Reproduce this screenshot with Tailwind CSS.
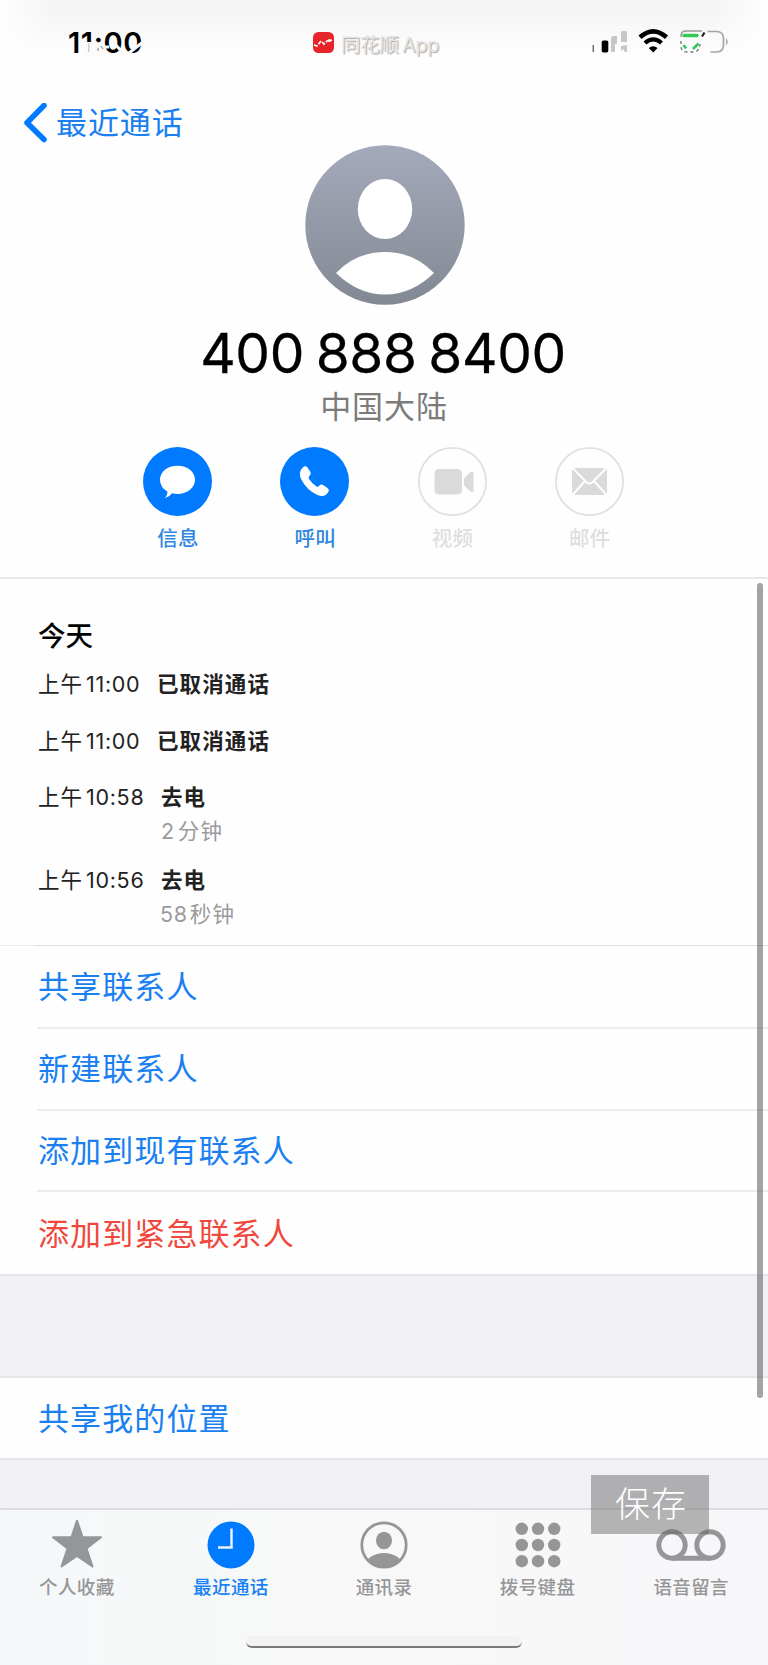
<!DOCTYPE html>
<html lang="zh-CN">
<head>
<meta charset="utf-8">
<title>最近通话</title>
<script src="https://cdn.jsdelivr.net/npm/@tailwindcss/browser@4"></script>
</head>
<body class="w-[768px] h-[1665px] overflow-hidden bg-[#fefefe] font-['Inter','Noto_Sans_CJK_SC',sans-serif] leading-none">
<div class="relative flex flex-col w-[768px] h-[1665px] overflow-hidden">

  <!-- status bar -->
  <header class="relative flex items-center h-[84px] shrink-0">
    <div class="absolute inset-x-0 top-0 h-[56px] bg-linear-to-b from-[#f4f4f4] via-[#f5f5f5] via-25% to-[#fefefe]"></div>
    <div class="absolute left-0 top-0 h-[58px] w-[56px] bg-linear-to-r from-[#fefefe] to-[#fefefe]/0"></div>
    <div class="absolute right-0 top-0 h-[58px] w-[56px] bg-linear-to-l from-[#fefefe] to-[#fefefe]/0"></div>
    <div class="relative ml-[68px] w-[76px] h-[32px] flex items-center text-[29px] font-semibold tracking-[0.600px] text-black whitespace-nowrap">11:00
      <svg class="absolute inset-0" width="76" height="32" viewBox="0 0 76 32" fill="none">
        <path d="M14.500 16H29V30H14.500Z" fill="#fbfbfb"/><path d="M28 18H37V29H28Z" fill="#fbfbfb"/>
        <path d="M20.800 17V26" stroke="#bbb"/><path d="M30 22v3M33 20l2 3" stroke="#777"/>
        <path d="M35 21l6 0M46 17l10 11M61 27l14-11" stroke="#fbfbfb" stroke-width="3"/>
      </svg>
    </div>
    <div class="relative ml-[169px] flex items-center gap-[7px] h-[30px]">
      <svg width="21" height="21" viewBox="0 0 21 21" fill="none"><rect width="21" height="21" rx="5.500" fill="#e8242b"/><path d="M1 13l3 1 4-5 3 3 3-3 5-1" stroke="#fff" stroke-width="1.600" stroke-dasharray="4 1.500"/><circle cx="16.500" cy="8.500" r="1.600" fill="#fff"/></svg>
      <div class="mt-[7px] text-[19.500px] tracking-[-0.200px] [word-spacing:-2px] text-[#e4e4e4] whitespace-nowrap [text-shadow:1px_1px_1px_#a5a5a5]">同花顺 App</div>
    </div>
    <svg class="absolute left-[585px] top-[20px]" width="150" height="50" viewBox="0 0 150 50" fill="none">
      <path d="M8.300 25v7" stroke="#666" stroke-width="1.400"/>
      <rect x="16.700" y="20.500" width="6.600" height="12" rx="1.800" fill="#000"/>
      <path d="M26 32V19q0-3 3-3h3v8h-2v8z" fill="#c6c6c6"/>
      <path d="M36 22V12.500q0-1.500 1.500-1.500h3q1.500 0 1.500 1.500V22zM36 26l6-1v7h-2l-2-3-2 2z" fill="#c6c6c6"/>
      <path d="M55 17.300Q68.200 5.400 81.500 17.300" stroke="#000" stroke-width="4.600"/>
      <path d="M60 23Q68.200 15.800 76.500 23" stroke="#000" stroke-width="4.200"/>
      <path d="M63.800 28Q68.200 24.600 72.600 28L68.200 32.600Z" fill="#000"/>
      <path d="M96 17v-1q0-5 5-5h16" stroke="#999" stroke-width="1.500"/>
      <path d="M96 21v5q0 6 6 6h8q4-1 5-8" stroke="#777" stroke-width="1.400" stroke-dasharray="3 3"/>
      <path d="M117 16.500l2.500-4" stroke="#222" stroke-width="2.200"/>
      <path d="M122.500 11.500h9q7 0 7 7v6.500q0 7-7 7h-6" stroke="#a5a5a5" stroke-width="1.700"/>
      <path d="M141 18q3.600 3.500 0 7.500z" fill="#aaa"/>
      <path d="M99 15.500h13" stroke="#34c759" stroke-width="3.400" stroke-linecap="round"/>
      <path d="M98.500 25l2.500 3.500M108 29l5.500-5.500" stroke="#34c759" stroke-width="2.600"/>
    </svg>
  </header>

  <!-- contact card -->
  <section class="relative flex flex-col items-center h-[495px] shrink-0 border-b-2 border-[#e9e9e9]">
    <a class="absolute left-[24px] top-[18px] h-[42px] flex items-center gap-[9px] text-[#1a80f2]">
      <svg width="23" height="40" viewBox="0 0 23 40" fill="none"><path d="M20 2.500L3 19.700 20 36.500" stroke="#007aff" stroke-width="5.500" stroke-linecap="round" stroke-linejoin="round"/></svg>
      <span class="-mt-[2px] text-[31px] tracking-[0.900px]">最近通话</span>
    </a>
    <svg class="mt-[60.500px] ml-px shrink-0" width="160" height="160" viewBox="0 0 160 160">
      <defs><linearGradient id="av" x1="0" y1="0" x2="0" y2="1"><stop stop-color="#a4aaba"/><stop offset="1" stop-color="#838993"/></linearGradient></defs>
      <circle cx="80" cy="80" r="79.700" fill="url(#av)"/>
      <ellipse cx="80" cy="64" rx="27.200" ry="30" fill="#fff"/>
      <path d="M31 128Q51 107 80 107T129 128Q107 149.500 80 149.500T31 128Z" fill="#fff"/>
    </svg>
    <h1 class="mt-[18.500px] -ml-[2px] h-[60px] flex items-center text-[55px] text-black whitespace-nowrap [word-spacing:-3.500px] tracking-[-0.350px] [-webkit-text-stroke:0.300px_black]">400 888 8400</h1>
    <p class="mt-[6px] h-[34px] flex items-center text-[31px] tracking-[0.900px] text-[#7b7b7b]">中国大陆</p>
    <div class="mt-[24px] -ml-px grid grid-cols-4 w-[549px] text-[20.500px] tracking-[0.500px]">
      <div class="flex flex-col items-center gap-[13px] text-[#2f86e0]">
        <svg width="69" height="69" viewBox="0 0 69 69"><circle cx="34.500" cy="34.500" r="34.500" fill="#007aff"/><path d="M34.500 18.700C44.500 18.700 52 24.800 52 32.800S44.500 47 34.500 47Q31.500 47 29 46.300Q26.500 50 22 51Q24.500 48 24.600 44.700Q17 40.500 17 32.800C17 24.800 24.500 18.700 34.500 18.700Z" fill="#fff"/></svg>
        <span class="ml-px font-medium">信息</span>
      </div>
      <div class="flex flex-col items-center gap-[13px] text-[#2f86e0]">
        <svg width="69" height="69" viewBox="0 0 69 69"><circle cx="34.500" cy="34.500" r="34.500" fill="#007aff"/><path d="M23.500 20.700Q26 18.700 28 21L31 25.500Q32 27.500 30 29.300Q28.500 30.500 29.500 32.500Q32.500 37 37 40Q38.500 40.800 39.700 39.300Q41.500 37.300 44 38.700L48 41.500Q50.300 43.300 48.500 46Q45 51.500 38 48.500Q27 43.500 21.500 32.500Q18.500 25.500 23.500 20.700Z" transform="translate(-.5 -.5)" fill="#fff"/></svg>
        <span class="ml-px font-medium">呼叫</span>
      </div>
      <div class="flex flex-col items-center gap-[13px] text-[#dedee0]">
        <svg width="69" height="69" viewBox="0 0 69 69"><circle cx="34.500" cy="34.500" r="33.600" fill="none" stroke="#e1e1e1" stroke-width="1.800"/><rect x="16.500" y="22" width="27.500" height="25.500" rx="4.500" fill="#dadada"/><path d="M46 31.500L52.500 25Q55.500 23.500 55.500 26V43.500Q55.500 46 52.500 44.500L46 38.500Z" fill="#dadada"/></svg>
        <span class="ml-px font-medium">视频</span>
      </div>
      <div class="flex flex-col items-center gap-[13px] text-[#dedee0]">
        <svg width="69" height="69" viewBox="0 0 69 69" fill="none"><circle cx="34.500" cy="34.500" r="33.600" stroke="#e1e1e1" stroke-width="1.800"/><rect x="17" y="21" width="35" height="27" rx="1.500" fill="#dadada"/><path d="M17.500 21L31.500 35.300Q34.500 38 37.500 35.300L51.500 21M17.500 48L29.500 34.500M51.500 48L39.500 34.500" stroke="#fff" stroke-width="2"/></svg>
        <span class="ml-px font-medium">邮件</span>
      </div>
    </div>
  </section>

  <!-- call history -->
  <section class="flex flex-col h-[366px] shrink-0 pl-[38px] pt-[42px] text-[21.500px] text-[#222]">
    <h2 class="h-[32px] flex items-center text-[27.500px] font-medium text-black">今天</h2>
    <div class="mt-[20px] h-[24px] flex items-center"><span class="w-[119px] flex gap-[3px]"><span class="tracking-[1px]">上午</span><span class="tracking-[0.700px]">11:00</span></span><b class="font-bold tracking-[1.100px]">已取消通话</b></div>
    <div class="mt-[33px] h-[24px] flex items-center"><span class="w-[119px] flex gap-[3px]"><span class="tracking-[1px]">上午</span><span class="tracking-[0.700px]">11:00</span></span><b class="font-bold tracking-[1.100px]">已取消通话</b></div>
    <div class="mt-[32px] h-[24px] flex items-center"><span class="w-[123px] flex gap-[3px]"><span class="tracking-[1px]">上午</span><span class="tracking-[0.700px]">10:58</span></span><b class="font-bold tracking-[1.100px]">去电</b></div>
    <div class="mt-[10px] ml-[123px] h-[24px] flex items-center gap-[3px] text-[#9b9b9e]"><span class="tracking-[0.700px]">2</span><span class="tracking-[1.100px]">分钟</span></div>
    <div class="mt-[25px] h-[24px] flex items-center"><span class="w-[123px] flex gap-[3px]"><span class="tracking-[1px]">上午</span><span class="tracking-[0.700px]">10:56</span></span><b class="font-bold tracking-[1.100px]">去电</b></div>
    <div class="mt-[10px] ml-[122px] h-[24px] flex items-center gap-[2px] text-[#9b9b9e]"><span class="tracking-[0.700px]">58</span><span class="tracking-[1.100px]">秒钟</span></div>
  </section>

  <!-- contact actions -->
  <section class="flex flex-col h-[329px] shrink-0 border-t border-[#e9e9e9] text-[31px] tracking-[1.100px] text-[#1a80f2]">
    <div class="ml-[37px] h-[83px] flex items-center border-b-2 border-[#ececec] shadow-[0_-1px_0_#dedede]"><span class="ml-px">共享联系人</span></div>
    <div class="ml-[37px] h-[82px] flex items-center border-b-2 border-[#ececec]"><span class="ml-px">新建联系人</span></div>
    <div class="ml-[37px] h-[82px] flex items-center border-b-2 border-[#ececec]"><span class="ml-px">添加到现有联系人</span></div>
    <div class="ml-[37px] h-[82px] flex items-center text-[#f0483c]"><span class="ml-px">添加到紧急联系人</span></div>
  </section>
  <div class="h-[104px] shrink-0 bg-[#f0f0f5] border-y-2 border-[#e7e6eb]"></div>
  <div class="h-[80px] shrink-0 pl-[38px] flex items-center text-[31px] tracking-[1.100px] text-[#1a80f2]">共享我的位置</div>
  <div class="h-[50px] shrink-0 bg-[#f0f0f5] border-t-2 border-[#e7e6eb]"></div>

  <!-- tab bar -->
  <nav class="grow border-t-2 border-[#dcdcdf] bg-linear-to-r from-[#f5f8f9] via-[#f8f8f8] to-[#f7f7fa]">
    <div class="grid grid-cols-5 pt-[9.500px] text-[18.500px] tracking-[0.400px] font-medium text-[#959698]">
      <div class="flex flex-col items-center gap-[8px]">
        <svg width="52" height="50" viewBox="0 0 52 50"><path d="M26 .5L31.500 17 50 17.300 35.500 28.500 41.500 46.500 26 36 10.500 46.500 16.500 28.500 2 17.300 20.500 17Z" fill="#959698" stroke="#959698" stroke-width="2" stroke-linejoin="round"/></svg>
        <span>个人收藏</span>
      </div>
      <div class="flex flex-col items-center gap-[8px] text-[#1680f5]">
        <svg class="ml-px" width="50" height="50" viewBox="0 0 50 50"><circle cx="25" cy="25" r="23.500" fill="#007aff"/><path d="M25.500 8.500V27.500H12" fill="none" stroke="#e8f2ff" stroke-width="2.500"/></svg>
        <span class="ml-px">最近通话</span>
      </div>
      <div class="flex flex-col items-center gap-[8px]">
        <svg width="50" height="50" viewBox="0 0 50 50"><defs><clipPath id="ct"><circle cx="25" cy="25" r="23"/></clipPath></defs><circle cx="25" cy="25" r="22.200" fill="none" stroke="#959698" stroke-width="2.800"/><ellipse cx="25" cy="20.500" rx="8" ry="8.800" fill="#959698"/><ellipse cx="25" cy="45" rx="18" ry="12" fill="#959698" clip-path="url(#ct)"/></svg>
        <span>通讯录</span>
      </div>
      <div class="flex flex-col items-center gap-[8px]">
        <svg width="50" height="50" viewBox="0 0 50 50" fill="#959698"><circle cx="8.800" cy="8.800" r="6.200"/><circle cx="25" cy="8.800" r="6.200"/><circle cx="41.200" cy="8.800" r="6.200"/><circle cx="8.800" cy="25" r="6.200"/><circle cx="25" cy="25" r="6.200"/><circle cx="41.200" cy="25" r="6.200"/><circle cx="8.800" cy="41.200" r="6.200"/><circle cx="25" cy="41.200" r="6.200"/><circle cx="41.200" cy="41.200" r="6.200"/></svg>
        <span>拨号键盘</span>
      </div>
      <div class="flex flex-col items-center gap-[8px]">
        <svg width="72" height="50" viewBox="0 0 72 50" fill="none" stroke="#959698" stroke-width="5"><circle cx="17" cy="25" r="13.200"/><circle cx="55" cy="25" r="13.200"/><path d="M17 38.200H55"/></svg>
        <span>语音留言</span>
      </div>
    </div>
    <div class="mx-auto mt-[40px] w-[276px] h-[12px] rounded-[6px] bg-[#f2f2f2] border-b-2 border-[#77787b]"></div>
  </nav>

  <!-- scroll indicator and save button float above the page -->
  <div class="absolute left-[757px] top-[583px] w-[6px] h-[815px] rounded-full bg-[#5a5a5a]/55"></div>
  <button class="absolute left-[591px] top-[1475px] w-[118px] h-[59px] flex items-center justify-center bg-[#606060]/45 pl-[2px] text-[35px] tracking-[1px] font-light text-white">保存</button>
</div>
</body>
</html>
